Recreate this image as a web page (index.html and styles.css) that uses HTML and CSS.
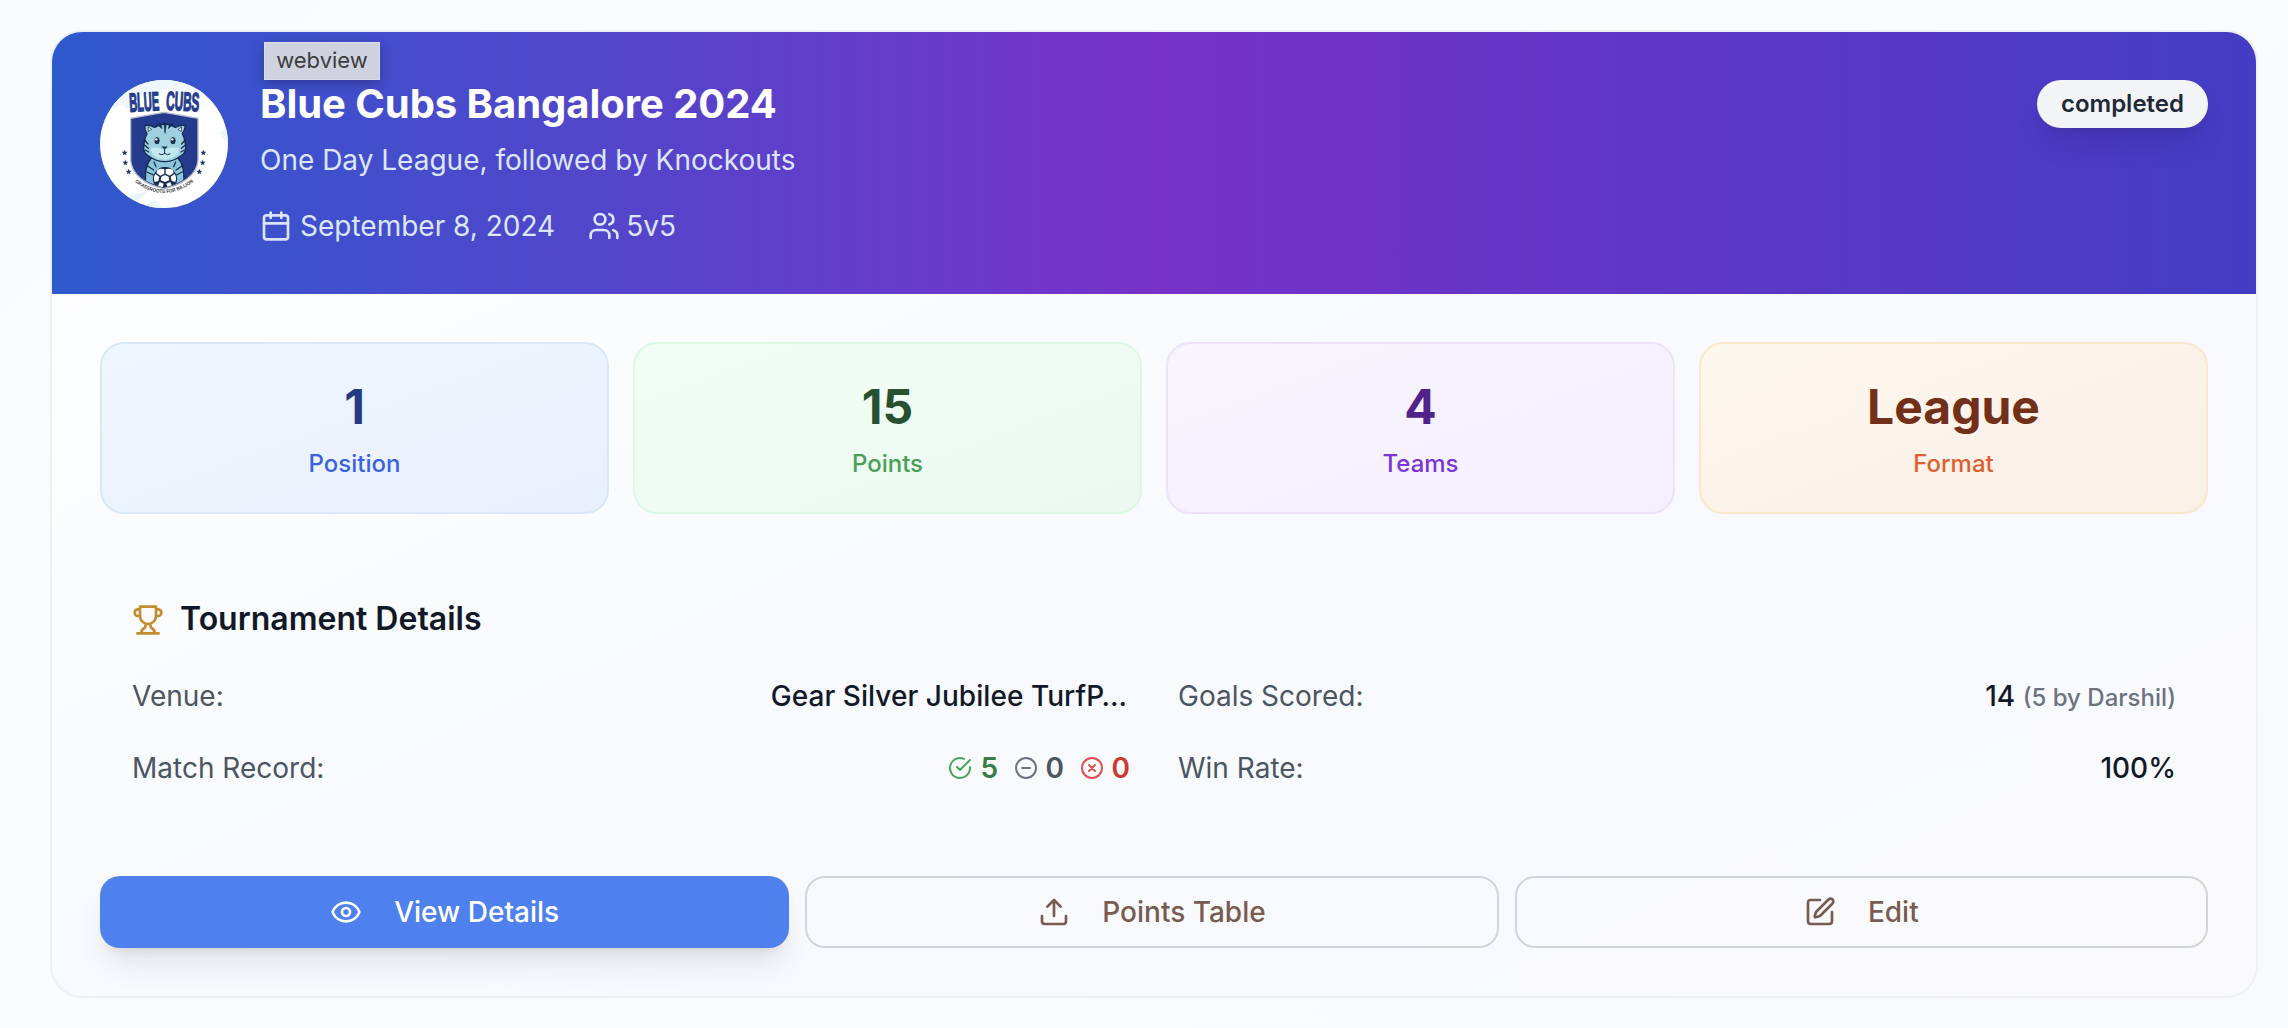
FILE: index.html
```html
<!DOCTYPE html>
<html lang="en">
<head>
<meta charset="utf-8">
<title>Blue Cubs Bangalore 2024</title>
<link rel="stylesheet" href="styles.css">
</head>
<body>
<article class="card">
  <header class="hero">
    <svg class="logo" viewBox="12 12 384 384" aria-label="Blue Cubs">
      <defs>
        <clipPath id="disc"><circle cx="204" cy="204" r="192"/></clipPath>
        <clipPath id="shield-clip"><path d="M107 129 L204 113 L303 129 V251 C300 295 255 323 204 334 C153 323 110 295 107 251Z"/></clipPath>
        <path id="motto" d="M116 318 Q203 384 292 318"/>
        <path id="star" d="M0-9 2.6-3 9-2.7 4 1.500 5.500 8 0 4.500-5.500 8-4 1.500-9-2.700-2.600-3Z"/>
      </defs>
      <g clip-path="url(#disc)">
        <rect x="12" y="12" width="384" height="384" fill="#fff"/>
        <path d="M12 12H310L210 40 150 55 95 100 78 85 50 100Z" fill="#eef7fd"/>
        <path d="M370 170 400 150V210Z M90 360 160 345 125 375Z M135 400 175 370 205 400Z" fill="#e9f6fc"/>
        <path d="M210 40 330 55 300 20Z" fill="#f3f9fd"/>
      </g>
      <g class="logo-name">
        <text x="101" y="107" textLength="90" lengthAdjust="spacingAndGlyphs" transform="rotate(-3 101 107)">BLUE</text>
        <text x="209" y="101" textLength="100" lengthAdjust="spacingAndGlyphs" transform="rotate(3 209 101)">CUBS</text>
      </g>
      <path d="M104 127 L204 109 L306 127 V252 C303 298 257 327 204 338 C151 327 107 298 104 252Z" fill="#253c8e" stroke="#b7bbc1" stroke-width="4"/>
      <g clip-path="url(#shield-clip)" stroke="#142c50" stroke-linejoin="round" stroke-linecap="round">
        <path d="M150 340C145 285 151 263 166 246H246C261 263 267 285 262 340Z" fill="#8dc6d8" stroke-width="4"/>
        <path d="M146 149Q160 145 176 154Q206 134 238 154Q254 145 268 149Q266 164 259 173Q268 190 269 216Q269 231 254 240Q232 257 206 257Q180 257 158 240Q143 231 143 216Q144 190 153 173Q146 164 146 149Z" fill="#9ed0df" stroke-width="4"/>
        <path d="M165 216Q187 212 203 221Q224 212 250 216Q250 245 206 251Q164 245 165 216Z" fill="#c3e8ef" stroke="none"/>
        <path d="M204 143 207 172 211 143Z M184 146 198 158 194 143Z M231 145 217 158 221 143Z" fill="#142c50" stroke-width="2"/>
        <path d="M146 192 156 204M145 207 157 217M148 222 158 228M267 192 257 204M268 207 256 217M265 222 255 228M155 270 173 282M153 288 172 297M258 270 240 282M259 288 241 297M174 258 180 272M239 258 233 272" fill="none" stroke-width="4"/>
        <path d="M157 153 167 160 158 166Z M256 153 246 160 255 166Z" fill="#dff5f8" stroke-width="2"/>
        <g fill="#142c50"><ellipse cx="183" cy="194" rx="7" ry="10"/><ellipse cx="231" cy="194" rx="7" ry="10"/><path d="M198 212H214L206 220Z"/></g>
        <path d="M206 220V232Q198 240 190 234M206 232Q214 240 222 234" fill="none" stroke-width="3"/>
        <g stroke="none" fill="#fff"><circle cx="181" cy="190" r="3.500"/><circle cx="229" cy="190" r="3.500"/></g>
        <circle cx="207" cy="309" r="35" fill="#142c50" stroke-width="3"/>
        <g fill="#fff" stroke="none">
          <path d="M184 282Q194 275 205 280L205 293 193 299 181 291Z"/>
          <path d="M230 282Q220 275 209 280L209 293 221 299 233 291Z"/>
          <path d="M178 294 190 302 187 315 176 318Q171 305 178 294Z"/>
          <path d="M236 294 224 302 227 315 238 318Q243 305 236 294Z"/>
          <path d="M196 302 207 297 218 302 220 313 207 318 194 313Z"/>
          <path d="M191 318 203 323 200 334 186 330Z M223 318 211 323 214 334 228 330Z"/>
        </g>
      </g>
      <g fill="#1f3d70"><use href="#star" x="86" y="230"/><use href="#star" x="88" y="260"/><use href="#star" x="98" y="287"/><use href="#star" x="322" y="230"/><use href="#star" x="320" y="260"/><use href="#star" x="310" y="287"/></g>
      <text class="logo-motto"><textPath href="#motto" textLength="192" lengthAdjust="spacingAndGlyphs">GRASSROOTS FOR BILLION</textPath></text>
    </svg>
    <div class="intro">
      <h1>Blue Cubs Bangalore 2024</h1>
      <p class="subtitle">One Day League, followed by Knockouts</p>
      <div class="meta">
        <span class="meta-item"><svg class="icon" viewBox="0 0 24 24"><path d="M8 2v4M16 2v4M3 10h18"/><rect x="3" y="4" width="18" height="18" rx="2"/></svg>September 8, 2024</span>
        <span class="meta-item"><svg class="icon" viewBox="0 0 24 24"><path d="M16 21v-2a4 4 0 0 0-4-4H6a4 4 0 0 0-4 4v2"/><circle cx="9" cy="7" r="4"/><path d="M22 21v-2a4 4 0 0 0-3-3.870M16 3.130a4 4 0 0 1 0 7.750"/></svg>5v5</span>
      </div>
    </div>
    <span class="badge">completed</span>
    <span class="tooltip">webview</span>
  </header>

  <div class="body">
    <section class="stats">
      <div class="stat blue"><strong>1</strong><span>Position</span></div>
      <div class="stat green"><strong>15</strong><span>Points</span></div>
      <div class="stat purple"><strong>4</strong><span>Teams</span></div>
      <div class="stat orange"><strong>League</strong><span>Format</span></div>
    </section>

    <section class="details">
      <h2><svg class="icon trophy" viewBox="0 0 24 24"><path d="M6 9H4.500a2.500 2.500 0 0 1 0-5H6M18 9h1.500a2.500 2.500 0 0 0 0-5H18M4 22h16M10 14.660V17c0 .550-.470.980-.970 1.210C7.850 18.750 7 20.240 7 22M14 14.660V17c0 .550.470.980.970 1.210C16.150 18.750 17 20.240 17 22M18 2H6v7a6 6 0 0 0 12 0V2Z"/></svg><span>Tournament Details</span></h2>
      <dl class="facts">
        <div><dt>Venue:</dt><dd class="venue">Gear Silver Jubilee TurfP…</dd></div>
        <div><dt>Goals Scored:</dt><dd>14 <small>(5 by Darshil)</small></dd></div>
        <div><dt>Match Record:</dt><dd class="record">
          <span class="won"><svg class="icon small" viewBox="0 0 24 24"><path d="M22 11.080V12a10 10 0 1 1-5.930-9.140M9 11l3 3L22 4"/></svg><b>5</b></span>
          <span class="drawn"><svg class="icon small" viewBox="0 0 24 24"><circle cx="12" cy="12" r="10"/><path d="M8 12h8"/></svg><b>0</b></span>
          <span class="lost"><svg class="icon small" viewBox="0 0 24 24"><circle cx="12" cy="12" r="10"/><path d="m15 9-6 6M9 9l6 6"/></svg><b>0</b></span>
        </dd></div>
        <div><dt>Win Rate:</dt><dd>100%</dd></div>
      </dl>
    </section>

    <div class="actions">
      <button class="btn primary"><svg class="icon" viewBox="0 0 24 24"><path d="M2.060 12.350a1 1 0 0 1 0-.700 10.750 10.750 0 0 1 19.880 0 1 1 0 0 1 0 .700 10.750 10.750 0 0 1-19.880 0"/><circle cx="12" cy="12" r="3"/></svg>View Details</button>
      <button class="btn"><svg class="icon" viewBox="0 0 24 24"><path d="M21 15v4a2 2 0 0 1-2 2H5a2 2 0 0 1-2-2v-4M17 8l-5-5-5 5M12 3v12"/></svg>Points Table</button>
      <button class="btn"><svg class="icon" viewBox="0 0 24 24"><path d="M12 3H5a2 2 0 0 0-2 2v14a2 2 0 0 0 2 2h14a2 2 0 0 0 2-2v-7"/><path d="M18.375 2.625a1 1 0 0 1 3 3l-9.013 9.014a2 2 0 0 1-.853.505l-2.873.840a.5.5 0 0 1-.620-.620l.840-2.873a2 2 0 0 1 .506-.852z"/></svg>Edit</button>
    </div>
  </div>
</article>
</body>
</html>
```
FILE: styles.css
```css
* { box-sizing: border-box; margin: 0; padding: 0; }

body {
  min-height: 1028px;
  padding: 30px 30px 30px 50px;
  background: linear-gradient(135deg, #fafbfd, #fbfcfd 50%, #f8fafc);
  font-family: Inter, "Liberation Sans", sans-serif;
  font-size: 28px;
  line-height: 40px;
  color: #111827;
}

.card {
  height: 968px;
  border: 2px solid #eff0f3;
  border-radius: 32px;
  overflow: hidden;
  display: flex;
  flex-direction: column;
  background: linear-gradient(155deg, #fff 0%, #f8fafd 45%, #f8f9fd 70%, #fafafc 100%);
}

.icon {
  width: 32px;
  height: 32px;
  flex: none;
  fill: none;
  stroke: currentColor;
  stroke-width: 2;
  stroke-linecap: round;
  stroke-linejoin: round;
}

.hero {
  position: relative;
  display: flex;
  align-items: flex-start;
  height: 262px;
  padding: 48px;
  gap: 32px;
  background: linear-gradient(90deg, #2e59cd, #7732c8 50%, #443cc4);
  color: #dbe6fb;
}

.logo { width: 128px; height: 128px; flex: none; overflow: visible; }
.logo-name { font: 700 79px "Liberation Sans", sans-serif; fill: #263d8c; stroke: #263d8c; stroke-width: 4; }
.logo-motto { font: 700 15px "Liberation Sans", sans-serif; fill: #34373b; }

.intro { flex: 1; }
.intro h1 { font-size: 40px; line-height: 47px; font-weight: 700; letter-spacing: -.05px; color: #fff; margin-bottom: 13px; }
.meta { display: flex; gap: 33px; margin-top: 26px; }
.meta-item { display: flex; align-items: center; gap: 8px; }
.meta-item + .meta-item { gap: 6px; }

.badge {
  padding: 8px 24px;
  border-radius: 24px;
  background: #f3f4f6;
  color: #1f2937;
  font-size: 24px;
  line-height: 32px;
  font-weight: 600;
  box-shadow: 0 20px 30px -6px rgb(0 0 0 / .1), 0 8px 12px -8px rgb(0 0 0 / .1);
}

.tooltip {
  position: absolute;
  left: 212px;
  top: 10px;
  width: 116px;
  height: 38px;
  border: 1px solid #d9dbe6;
  background: #cfd2df;
  color: #3d3d40;
  font-size: 22px;
  line-height: 34px;
  text-align: center;
  box-shadow: 0 4px 12px rgb(0 0 0 / .25);
}

.body { flex: 1; padding: 48px; display: flex; flex-direction: column; }

.stats { display: grid; grid-template-columns: repeat(4, 1fr); gap: 24px; }
.stat {
  height: 172px;
  padding: 32px;
  border: 2px solid;
  border-radius: 24px;
  display: flex;
  flex-direction: column;
  gap: 10px;
  text-align: center;
}
.stat strong { font-size: 48px; line-height: 62px; font-weight: 700; }
.stat span { font-size: 24px; line-height: 32px; font-weight: 500; }

.blue { background: linear-gradient(160deg, #f0f6ff, #e9f0fc); border-color: #d9e7fb; color: #263a83; }
.blue span { color: #3862e0; }
.green { background: linear-gradient(160deg, #f2fdf4, #ebf9f2); border-color: #dcf8e3; color: #275130; }
.green span { color: #48a054; }
.purple { background: linear-gradient(160deg, #f9f5fe, #f3effd); border-color: #ece2fc; color: #51228a; }
.purple span { color: #7c34d6; }
.orange { background: linear-gradient(160deg, #fef7ed, #f9f0e6); border-color: #fae7cc; color: #722f19; }
.orange span { color: #dd6130; }

.details { margin-top: 48px; padding: 32px; }
.details h2 {
  display: flex;
  align-items: center;
  gap: 16px;
  height: 52px;
  margin-bottom: 30px;
  font-size: 32px;
  line-height: 50px;
  font-weight: 600;
}
.details h2 span { height: 52px; }
.trophy { color: #c38d2f; }

.facts { display: grid; grid-template-columns: 1fr 1fr; gap: 32px 48px; }
.facts > div { display: flex; justify-content: space-between; height: 40px; }
.facts dt { color: #4b5563; }
.facts dd { font-weight: 500; }
.facts .venue { padding-right: 3px; letter-spacing: .05px; }
.facts small { font-size: 24px; color: #6b7280; }
.facts .record { display: flex; gap: 15.5px; }
.record span { display: flex; align-items: center; gap: 8px; }
.record b { font-weight: 600; }
.small { width: 24px; height: 24px; }
.won { color: #4aa455; }
.won b { color: #3a7d44; }
.drawn { color: #6b7280; }
.drawn b { color: #4b5563; }
.lost { color: #de524c; }
.lost b { color: #cb3a31; }

.actions { display: flex; gap: 16px; margin-top: auto; }
.btn {
  flex: 1 1 0;
  height: 72px;
  padding: 0 32px;
  border: 2px solid #d1d5db;
  border-radius: 20px;
  background: transparent;
  color: #785c4f;
  font: 500 28px/40px Inter, "Liberation Sans", sans-serif;
  display: flex;
  align-items: center;
  justify-content: center;
  gap: 32px;
}
.primary {
  border: 0;
  background: #4e80ee;
  color: #fff;
  box-shadow: 0 20px 30px -6px rgb(0 0 0 / .1), 0 8px 12px -8px rgb(0 0 0 / .1);
}
```
